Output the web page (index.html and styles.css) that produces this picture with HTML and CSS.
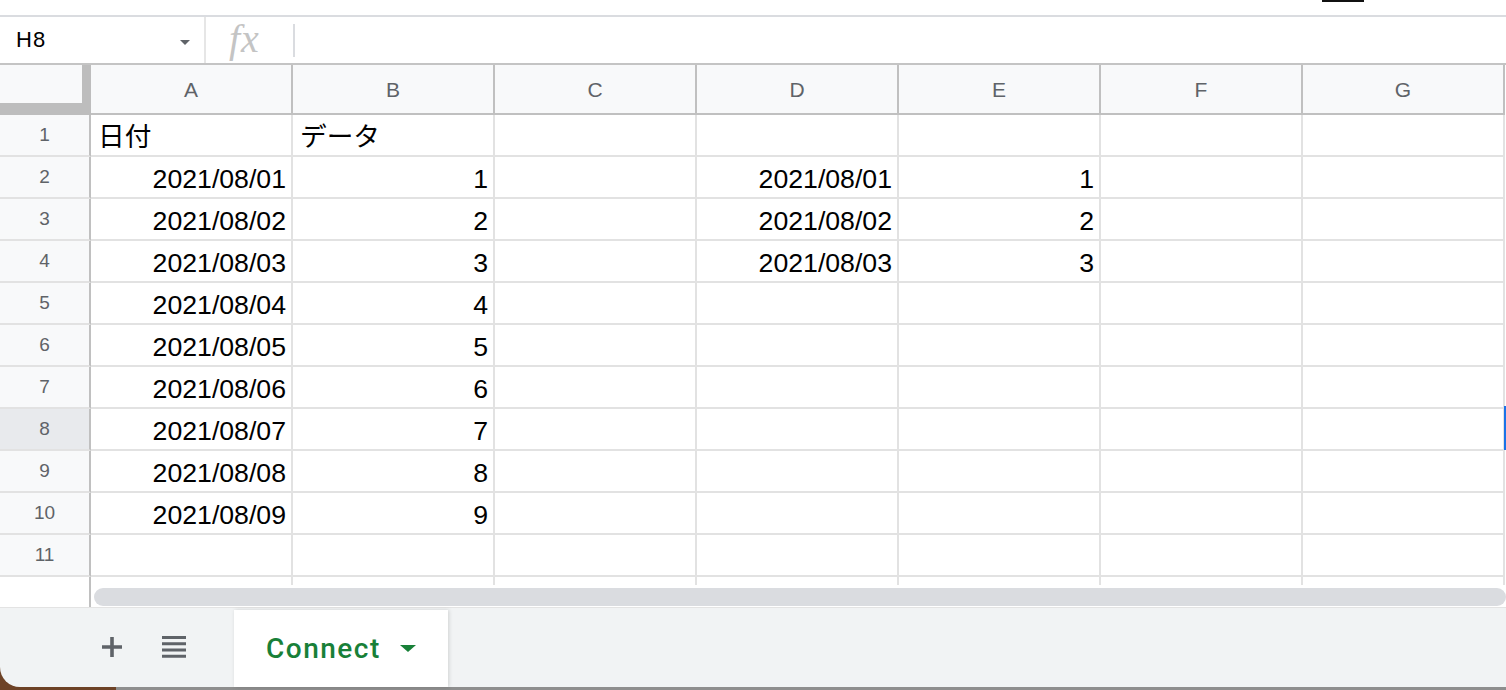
FILE: index.html
```html
<!DOCTYPE html>
<html lang="ja">
<head>
    <meta charset="UTF-8">
    <meta name="viewport" content="width=device-width, initial-scale=1.0">
    <title>Connect - Sheet</title>
    <link rel="stylesheet" href="styles.css">
</head>
<body>
    <div class="top-strip">
        <div class="mark"></div>
    </div>

    <div class="formula-bar">
        <div class="name-box">
            <span>H8</span>
            <span class="caret"></span>
        </div>
        <div class="fx">fx</div>
        <div class="fx-sep"></div>
        <div class="formula-input"></div>
    </div>

    <div class="sheet">
        <div class="row head">
            <div class="corner"></div>
            <div class="col">A</div>
            <div class="col">B</div>
            <div class="col">C</div>
            <div class="col">D</div>
            <div class="col">E</div>
            <div class="col">F</div>
            <div class="col">G</div>
        </div>

        <div class="row">
            <div class="rh">1</div>
            <div class="cell">日付</div>
            <div class="cell">データ</div>
            <div class="cell"></div>
            <div class="cell"></div>
            <div class="cell"></div>
            <div class="cell"></div>
            <div class="cell"></div>
        </div>
        <div class="row">
            <div class="rh">2</div>
            <div class="cell num">2021/08/01</div>
            <div class="cell num">1</div>
            <div class="cell"></div>
            <div class="cell num">2021/08/01</div>
            <div class="cell num">1</div>
            <div class="cell"></div>
            <div class="cell"></div>
        </div>
        <div class="row">
            <div class="rh">3</div>
            <div class="cell num">2021/08/02</div>
            <div class="cell num">2</div>
            <div class="cell"></div>
            <div class="cell num">2021/08/02</div>
            <div class="cell num">2</div>
            <div class="cell"></div>
            <div class="cell"></div>
        </div>
        <div class="row">
            <div class="rh">4</div>
            <div class="cell num">2021/08/03</div>
            <div class="cell num">3</div>
            <div class="cell"></div>
            <div class="cell num">2021/08/03</div>
            <div class="cell num">3</div>
            <div class="cell"></div>
            <div class="cell"></div>
        </div>
        <div class="row">
            <div class="rh">5</div>
            <div class="cell num">2021/08/04</div>
            <div class="cell num">4</div>
            <div class="cell"></div>
            <div class="cell"></div>
            <div class="cell"></div>
            <div class="cell"></div>
            <div class="cell"></div>
        </div>
        <div class="row">
            <div class="rh">6</div>
            <div class="cell num">2021/08/05</div>
            <div class="cell num">5</div>
            <div class="cell"></div>
            <div class="cell"></div>
            <div class="cell"></div>
            <div class="cell"></div>
            <div class="cell"></div>
        </div>
        <div class="row">
            <div class="rh">7</div>
            <div class="cell num">2021/08/06</div>
            <div class="cell num">6</div>
            <div class="cell"></div>
            <div class="cell"></div>
            <div class="cell"></div>
            <div class="cell"></div>
            <div class="cell"></div>
        </div>
        <div class="row">
            <div class="rh active">8</div>
            <div class="cell num">2021/08/07</div>
            <div class="cell num">7</div>
            <div class="cell"></div>
            <div class="cell"></div>
            <div class="cell"></div>
            <div class="cell"></div>
            <div class="cell"></div>
        </div>
        <div class="row">
            <div class="rh">9</div>
            <div class="cell num">2021/08/08</div>
            <div class="cell num">8</div>
            <div class="cell"></div>
            <div class="cell"></div>
            <div class="cell"></div>
            <div class="cell"></div>
            <div class="cell"></div>
        </div>
        <div class="row">
            <div class="rh">10</div>
            <div class="cell num">2021/08/09</div>
            <div class="cell num">9</div>
            <div class="cell"></div>
            <div class="cell"></div>
            <div class="cell"></div>
            <div class="cell"></div>
            <div class="cell"></div>
        </div>
        <div class="row">
            <div class="rh">11</div>
            <div class="cell"></div>
            <div class="cell"></div>
            <div class="cell"></div>
            <div class="cell"></div>
            <div class="cell"></div>
            <div class="cell"></div>
            <div class="cell"></div>
        </div>
        <div class="row">
            <div class="rh blank"></div>
            <div class="cell"></div>
            <div class="cell"></div>
            <div class="cell"></div>
            <div class="cell"></div>
            <div class="cell"></div>
            <div class="cell"></div>
            <div class="cell"></div>
        </div>

        <!-- left edge of the selected H8 cell -->
        <div class="sel-edge"></div>

        <div class="scroll-track">
            <div class="scroll-thumb"></div>
        </div>
    </div>

    <div class="footer">
        <div class="tabbar">
            <button class="tab-btn add" title="Add sheet">
                <svg width="20" height="20" viewBox="0 0 20 20">
                    <path d="M10 0v20M0 10h20" stroke="#5f6368" stroke-width="3.6" fill="none"/>
                </svg>
            </button>
            <button class="tab-btn list" title="All sheets">
                <svg width="24" height="22" viewBox="0 0 24 22">
                    <path d="M0 1.6h24M0 7.8h24M0 14.1h24M0 20.3h24" stroke="#5f6368" stroke-width="3" fill="none"/>
                </svg>
            </button>
            <div class="sheet-tab">
                <span class="sheet-name">Connect</span>
                <span class="tab-caret"></span>
            </div>
        </div>
        <div class="desk"></div>
    </div>
</body>
</html>
```

FILE: styles.css
```css
* {
    margin: 0;
    padding: 0;
    box-sizing: border-box;
}

body {
    width: 1506px;
    height: 690px;
    overflow: hidden;
    background-color: #fff;
    font-family: "Liberation Sans", Arial, "Noto Sans CJK JP", sans-serif;
    color: #000;
}

/* top strip */
.top-strip {
    height: 15px;
    display: flex;
    justify-content: flex-end;
    padding-right: 142px;
}

.top-strip .mark {
    width: 42px;
    height: 2px;
    background-color: #111;
}

/* formula bar */
.formula-bar {
    height: 50px;
    display: flex;
    border-top: 2px solid #dadce0;
    border-bottom: 2px solid #c4c4c4;
}

.name-box {
    width: 206px;
    flex: none;
    display: flex;
    align-items: center;
    justify-content: space-between;
    padding: 0 14px 0 16px;
    border-right: 2px solid #e6e6e6;
    font-size: 22px;
    letter-spacing: 1px;
}

.name-box .caret {
    margin-top: 4px;
    border-left: 5px solid transparent;
    border-right: 5px solid transparent;
    border-top: 5px solid #5f6368;
}

.fx {
    width: 87px;
    flex: none;
    display: flex;
    align-items: center;
    padding: 0 0 2px 23px;
    font-family: "Liberation Serif", "Times New Roman", serif;
    font-style: italic;
    font-size: 40px;
    letter-spacing: 1px;
    color: #c4c4c4;
    line-height: 1;
}

.fx-sep {
    width: 2px;
    height: 33px;
    align-self: center;
    background-color: #dadce0;
}

.formula-input {
    flex: 1;
}

/* grid */
.sheet {
    position: relative;
    height: 542px;
    overflow: hidden;
}

.row {
    display: flex;
    height: 42px;
}

.row.head {
    height: 50px;
}

.corner {
    width: 91px;
    flex: none;
    background-color: #f8f9fa;
    border-right: 9px solid #bdbdbd;
    border-bottom: 12px solid #bdbdbd;
}

.col {
    width: 202px;
    flex: none;
    display: flex;
    align-items: center;
    justify-content: center;
    padding-top: 2px;
    background-color: #f8f9fa;
    border-right: 2px solid #c0c0c0;
    border-bottom: 2px solid #c0c0c0;
    color: #5f6368;
    font-size: 21px;
}

.rh {
    width: 91px;
    flex: none;
    display: flex;
    align-items: center;
    justify-content: center;
    background-color: #f8f9fa;
    border-right: 2px solid #c0c0c0;
    border-bottom: 2px solid #e2e2e2;
    color: #5f6368;
    font-size: 19px;
}

.rh.active {
    background-color: #e8eaed;
}

.rh.blank {
    background-color: #fff;
}

.cell {
    width: 202px;
    flex: none;
    display: flex;
    align-items: flex-end;
    padding: 0 5px 3px 7px;
    border-right: 2px solid #e2e2e2;
    border-bottom: 2px solid #e2e2e2;
    font-size: 26.67px;
    line-height: 30px;
    white-space: nowrap;
}

.cell.num {
    justify-content: flex-end;
}

.sel-edge {
    position: absolute;
    right: 0;
    top: 341px;
    width: 2px;
    height: 44px;
    background-color: #1a73e8;
}

.scroll-track {
    position: absolute;
    left: 91px;
    right: 0;
    bottom: 0;
    height: 22px;
    padding: 3px 0 1px 3px;
    background-color: #fff;
}

.scroll-thumb {
    height: 18px;
    border-radius: 9px;
    background-color: #dadce0;
}

/* sheet tabs */
.footer {
    height: 83px;
    background: linear-gradient(to right, #6d4226 0, #6d4226 116px, #8e8e8e 116px);
}

.tabbar {
    height: 80px;
    display: flex;
    align-items: stretch;
    padding-left: 102px;
    background-color: #f1f3f4;
    border-top: 1px solid #e3e3e3;
    border-bottom-left-radius: 20px;
}

.tab-btn {
    display: flex;
    align-items: center;
    background: none;
    border: none;
    padding-bottom: 2px;
}

.tab-btn.add {
    margin-right: 40px;
}

.tab-btn.list {
    margin-right: 48px;
}

.sheet-tab {
    width: 214px;
    margin-top: 2px;
    display: flex;
    align-items: center;
    justify-content: space-between;
    padding: 0 32px;
    background-color: #fff;
    box-shadow: 1px 0 4px rgba(0, 0, 0, 0.14);
}

.sheet-name {
    font-family: Roboto, "Liberation Sans", sans-serif;
    font-weight: 500;
    font-size: 28px;
    letter-spacing: 1.5px;
    color: #188038;
}

.tab-caret {
    border-left: 8px solid transparent;
    border-right: 8px solid transparent;
    border-top: 7px solid #188038;
}

.desk {
    height: 3px;
}
```
